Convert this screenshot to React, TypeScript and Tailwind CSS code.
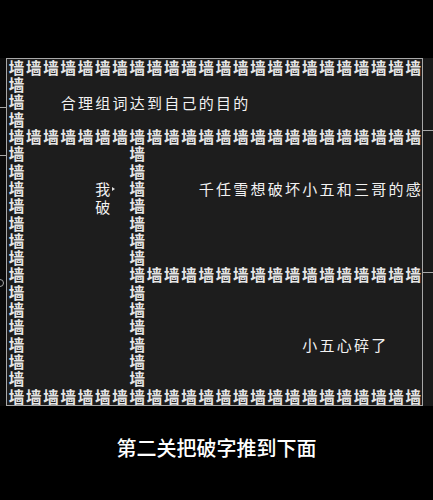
import React from "react";

const COLS = 24;
const ROWS = 20;

type Cell = { ch: string; kind: "wall" | "text" | "empty"; cursor?: boolean };

function buildGrid(): Cell[][] {
  const g: Cell[][] = [];
  for (let r = 0; r < ROWS; r++) {
    const row: Cell[] = [];
    for (let c = 0; c < COLS; c++) row.push({ ch: "", kind: "empty" });
    g.push(row);
  }
  const wall = (r: number, c: number) => {
    g[r][c] = { ch: "墙", kind: "wall" };
  };
  for (const r of [0, 4, 19]) for (let c = 0; c < COLS; c++) wall(r, c);
  for (let r = 1; r < 19; r++) wall(r, 0);
  for (let r = 5; r < 19; r++) wall(r, 7);
  for (let c = 7; c < COLS; c++) wall(12, c);
  const put = (r: number, c: number, s: string) => {
    Array.from(s).forEach((ch, i) => {
      g[r][c + i] = { ch, kind: "text" };
    });
  };
  put(2, 3, "合理组词达到自己的目的");
  put(7, 11, "千任雪想破坏小五和三哥的感");
  put(16, 17, "小五心碎了");
  g[7][5] = { ch: "我", kind: "text", cursor: true };
  g[8][5] = { ch: "破", kind: "text" };
  return g;
}

export default function App() {
  const grid = buildGrid();
  return (
    <div
      className="relative w-[433px] h-[500px] bg-black overflow-hidden flex flex-col"
      style={{ fontFamily: '"Noto Sans CJK SC", "Noto Sans", sans-serif' }}
    >
      <div className="flex pt-[58px]">
        <div className="w-[6px] h-[348px] bg-[#0b0b0b]" />
        <div className="w-[417px] h-[348px] border border-[#a8a8a8] bg-[#1d1d1d] pl-[1px]">
          <div className="grid grid-cols-[repeat(24,17.25px)] grid-rows-[repeat(20,17.3px)]">
            {grid.flat().map((cell, i) => (
              <div
                key={i}
                className="relative flex items-center justify-center leading-none"
              >
                {cell.kind === "wall" && (
                  <span className="text-[15.5px] font-bold text-[#e6e6e6] leading-none">
                    {cell.ch}
                  </span>
                )}
                {cell.kind === "text" && (
                  <span className="text-[15px] text-[#f2f2f2] leading-none">
                    {cell.ch}
                  </span>
                )}
                {cell.cursor && (
                  <span className="absolute right-[-3px] top-[7px] w-0 h-0 border-y-[2px] border-y-transparent border-l-[3px] border-l-[#e0e0e0]" />
                )}
              </div>
            ))}
          </div>
        </div>
        <div className="w-[10px] h-[348px] bg-[#1a1a1a]" />
      </div>
      <div className="mt-[30px] text-center text-[20px] leading-[24px] text-white font-medium">
        第二关把破字推到下面
      </div>
      <span className="absolute left-0 top-[107px] w-[6px] h-px bg-[#a8a8a8]" />
      <span className="absolute left-0 top-[155px] w-[6px] h-px bg-[#a8a8a8]" />
      <span className="absolute left-[-4px] top-[279px] w-[8px] h-[8px] rounded-full border border-[#a8a8a8]" />
      <span className="absolute left-[423px] top-[130px] w-[10px] h-px bg-[#a8a8a8]" />
      <span className="absolute left-[423px] top-[272px] w-[10px] h-px bg-[#a8a8a8]" />
    </div>
  );
}
